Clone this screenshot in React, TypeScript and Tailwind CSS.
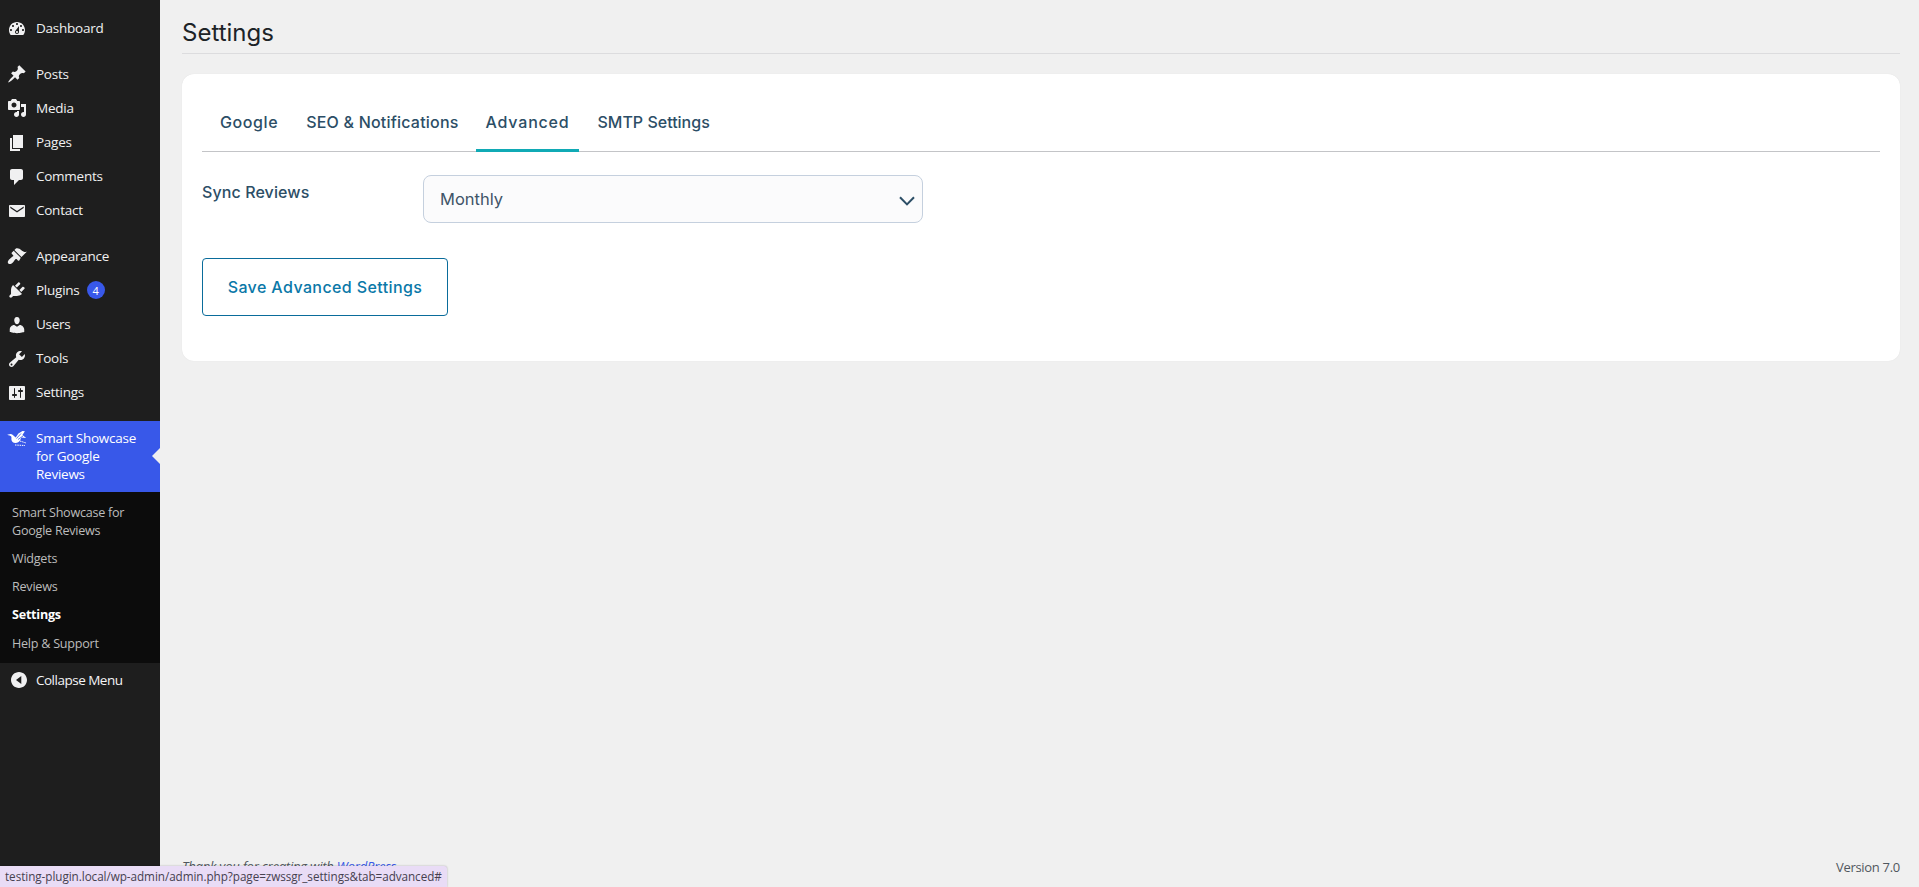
import React from "react";

const ICONS: Record<string, string> = {
  dashboard:
    "M3.76 16h12.48c1.1-1.37 1.76-3.11 1.76-5 0-4.42-3.58-8-8-8s-8 3.58-8 8c0 1.89.66 3.63 1.76 5zM10 4c.55 0 1 .45 1 1s-.45 1-1 1-1-.45-1-1 .45-1 1-1zM6 6c.55 0 1 .45 1 1s-.45 1-1 1-1-.45-1-1 .45-1 1-1zm8 0c.55 0 1 .45 1 1s-.45 1-1 1-1-.45-1-1 .45-1 1-1zm-5.37 5.55L12 7v6c0 1.1-.9 2-2 2s-2-.9-2-2c0-.57.24-1.08.63-1.45zM4 10c.55 0 1 .45 1 1s-.45 1-1 1-1-.45-1-1 .45-1 1-1zm12 0c.55 0 1 .45 1 1s-.45 1-1 1-1-.45-1-1 .45-1 1-1zm-5 3c0-.55-.45-1-1-1s-1 .45-1 1 .45 1 1 1 1-.45 1-1z",
  pin: "M10.44 3.02l1.82-1.82 6.36 6.35-1.83 1.82c-1.05-.68-2.48-.57-3.41.36l-.75.75c-.92.93-1.04 2.35-.35 3.41l-1.83 1.82-2.41-2.41-2.8 2.79c-.42.42-3.38 2.71-3.8 2.29s1.86-3.39 2.28-3.81l2.79-2.79L4.1 9.36l1.83-1.82c1.05.69 2.48.57 3.4-.36l.75-.75c.93-.92 1.05-2.35.36-3.41z",
  media:
    "M13 11V4c0-.55-.45-1-1-1h-1.67L9 1H5L3.67 3H2c-.55 0-1 .45-1 1v7c0 .55.45 1 1 1h10c.55 0 1-.45 1-1zM7 4.5c1.38 0 2.5 1.12 2.5 2.5S8.38 9.5 7 9.5 4.5 8.38 4.5 7 5.62 4.5 7 4.5zM14 6h5v10.5c0 1.38-1.12 2.5-2.5 2.5S14 17.88 14 16.5s1.12-2.5 2.5-2.5c.17 0 .34.02.5.05V9h-3V6zm-4 8.05V13h2v3.5c0 1.38-1.12 2.5-2.5 2.5S7 17.88 7 16.5 8.12 14 9.5 14c.17 0 .34.02.5.05z",
  page: "M6 15V2h10v13H6zm-1 1h8v2H3V5h2v11z",
  comments:
    "M5 2h9c1.1 0 2 .9 2 2v7c0 1.1-.9 2-2 2h-2l-5 5v-5H5c-1.1 0-2-.9-2-2V4c0-1.1.9-2 2-2z",
  email:
    "M3 4h14c.55 0 1 .45 1 1v10c0 .55-.45 1-1 1H3c-.55 0-1-.45-1-1V5c0-.55.45-1 1-1zm.3 1.6v1.5L10 11.6l6.7-4.5V5.6L10 10.1 3.3 5.6z",
  brush:
    "M14.48 11.06L7.41 3.99l1.5-1.5c.5-.56 2.3-.47 3.51.32 1.21.8 1.43 1.28 2.91 2.1 1.18.64 2.45 1.26 4.45.85zm-.71.71L6.7 4.7 4.93 6.47c-.39.39-.39 1.02 0 1.41l1.06 1.06c.39.39.39 1.03 0 1.42-.6.6-1.43 1.11-2.21 1.69-.35.26-.7.53-1.01.84C1.43 13.73 0 16.18 1.33 17.51c.56.56 1.41.66 2.21.49.8-.18 1.61-.69 2.33-1.41.31-.31.58-.66.84-1.01.58-.78 1.09-1.61 1.69-2.21.39-.39 1.03-.39 1.42 0l1.06 1.06c.39.39 1.02.39 1.41 0z",
  plugin:
    "M13.11 4.36L9.87 7.6 8 5.73l3.24-3.24c.35-.34 1.05-.2 1.56.32.52.51.66 1.21.31 1.55zm-8 1.77l.91-1.12 9.01 9.01-1.19.84c-.71.71-2.63 1.16-3.82 1.16H6.14L4.9 17.26c-.59.59-1.54.59-2.12 0-.59-.58-.59-1.53 0-2.12l1.24-1.24v-3.88c0-1.13.4-3.19 1.09-3.89zm7.26 3.97l3.24-3.24c.34-.35 1.04-.21 1.55.31.52.51.66 1.21.31 1.55l-3.24 3.25z",
  users:
    "M10 9.25c-2.27 0-2.73-3.44-2.73-3.44C7 4.02 7.82 2 9.97 2c2.16 0 2.98 2.02 2.71 3.81 0 0-.41 3.44-2.68 3.44zm0 2.57L12.72 10c2.39 0 4.52 2.33 4.52 4.53v2.49s-3.65 1.13-7.24 1.13c-3.65 0-7.24-1.13-7.24-1.13v-2.49c0-2.25 1.94-4.48 4.47-4.48z",
  tools:
    "M16.68 9.77c-1.34 1.34-3.3 1.67-4.95.99l-5.41 6.52c-.99.99-2.59.99-3.58 0s-.99-2.59 0-3.57l6.52-5.42c-.68-1.65-.35-3.61.99-4.95 1.28-1.28 3.12-1.62 4.72-1.06l-2.89 2.89 2.82 2.82 2.86-2.87c.53 1.58.18 3.39-1.08 4.65zM3.81 16.21c.4.39 1.04.39 1.43 0 .4-.4.4-1.04 0-1.43-.39-.4-1.03-.4-1.43 0-.39.39-.39 1.03 0 1.43z",
  settings:
    "M18 16V4c0-.55-.45-1-1-1H3c-.55 0-1 .45-1 1v12c0 .55.45 1 1 1h14c.55 0 1-.45 1-1zM8 11h1c.55 0 1 .45 1 1s-.45 1-1 1H8v1.5c0 .28-.22.5-.5.5s-.5-.22-.5-.5V13H6c-.55 0-1-.45-1-1s.45-1 1-1h1V5.5c0-.28.22-.5.5-.5s.5.22.5.5V11zm5-2h-1c-.55 0-1-.45-1-1s.45-1 1-1h1V5.5c0-.28.22-.5.5-.5s.5.22.5.5V7h1c.55 0 1 .45 1 1s-.45 1-1 1h-1v5.5c0 .28-.22.5-.5.5s-.5-.22-.5-.5V9z",
  collapse:
    "M10 2c4.42 0 8 3.58 8 8s-3.58 8-8 8-8-3.58-8-8 3.58-8 8-8zm2.3 4L7 10l5.300 4V6z",
};

function Dash({ name }: { name: string }) {
  return (
    <svg viewBox="0 0 20 20" className="h-5 w-5 shrink-0 fill-[#f0f0f1]">
      <path d={ICONS[name]} fillRule="evenodd" />
    </svg>
  );
}

function Bird() {
  return (
    <svg viewBox="0 0 20 20" className="h-5 w-5 shrink-0">
      <path fill="#fff" d="M0.200 5.800 3.600 4.900c1.200-.1 2 .7 2.800 1.600l2.300 2 2.700-3.900L15.500 2l2.400.300-2.500 3.700 3.800 3-4.800-.5-1.400 3c-.9 1.500-2.400 2.500-4.500 2.500-2.400 0-4.100-1.500-4.100-3.800 0-1.100.2-1.900-.2-2.600C3.600 6.600 2 6.400.2 5.800z" />
      <path fill="none" stroke="#3858e9" strokeWidth=".8" d="M9.500 9.500 14 4.500M11 10.500 16 7" />
      <path fill="none" stroke="#fff" strokeWidth="1" d="M13 12 19 14M8 16 18 16.500" strokeDasharray="1.500 .8" />
    </svg>
  );
}

function Item({ icon, label, badge }: { icon: string; label: string; badge?: string }) {
  return (
    <div className="flex h-[34.2px] items-center pl-[7px] text-[#f0f0f1]">
      <div className="w-[29px]">
        <Dash name={icon} />
      </div>
      <span className="pb-px">{label}</span>
      {badge && (
        <span className="ml-[7px] flex h-[18px] w-[18px] items-center justify-center rounded-full bg-[#3858e9] text-[11px] leading-none text-white">
          {badge}
        </span>
      )}
    </div>
  );
}

function Sub({ label, active }: { label: string; active?: boolean }) {
  return (
    <div className={`px-3 py-[5px] text-[12.6px] leading-[18.2px] ${active ? "font-bold text-white" : "text-[#bcbcbc]"}`}>
      {label}
    </div>
  );
}

const UI = "font-['Open_Sans','Noto_Sans',sans-serif]";
const PP = "font-['Inter','Lato',sans-serif]";

export default function App() {
  return (
    <div className={`relative flex h-[887px] w-full overflow-hidden bg-[#f0f0f0] ${UI} text-[13.5px] tracking-[-0.25px]`}>
      <aside className="flex w-[160px] shrink-0 flex-col bg-[#1e1e1e] pt-3">
        <Item icon="dashboard" label="Dashboard" />
        <div className="h-[11px]" />
        <Item icon="pin" label="Posts" />
        <Item icon="media" label="Media" />
        <Item icon="page" label="Pages" />
        <Item icon="comments" label="Comments" />
        <Item icon="email" label="Contact" />
        <div className="h-[11px]" />
        <Item icon="brush" label="Appearance" />
        <Item icon="plugin" label="Plugins" badge="4" />
        <Item icon="users" label="Users" />
        <Item icon="tools" label="Tools" />
        <Item icon="settings" label="Settings" />
        <div className="h-[11px]" />
        <div className="relative flex bg-[#3858e9] py-2 pl-[7px] pr-2 leading-[18.2px] text-white">
          <div className="w-[29px]">
            <Bird />
          </div>
          <div className="w-[112px]">Smart Showcase for Google Reviews</div>
          <div className="absolute right-0 top-[27px] h-0 w-0 border-y-[8px] border-r-[8px] border-y-transparent border-r-[#f0f0f0]" />
        </div>
        <div className="bg-[#0c0c0c] pb-[5px] pt-[7px]">
          <Sub label="Smart Showcase for Google Reviews" />
          <Sub label="Widgets" />
          <Sub label="Reviews" />
          <Sub label="Settings" active />
          <Sub label="Help & Support" />
        </div>
        <div className="flex h-[34px] items-center pl-[9px] text-[#f4f4f6]">
          <div className="w-[27px]">
            <Dash name="collapse" />
          </div>
          <span className="tracking-[-0.5px]">Collapse Menu</span>
        </div>
      </aside>

      <main className={`relative flex min-w-0 flex-1 flex-col pl-[22px] pr-[19px] ${PP} tracking-normal`}>
        <h1 className="flex h-[54px] items-end border-b border-[#dcdcde] pb-px text-[24px] font-normal leading-[38px] text-[#1d2327]">
          Settings
        </h1>
        <section className="mt-5 h-[287px] rounded-xl bg-white px-5 pt-[21px] shadow-[0_0_1px_rgba(0,0,0,0.1)]">
          <div className="flex h-[57px] items-stretch border-b border-[#c3c4c7] text-[16px] font-medium tracking-[0.2px] text-[#2c4e66]">
            <div className="ml-[9px] flex items-center px-[9px] pb-[3px] tracking-[0.6px]">Google</div>
            <div className="ml-[10px] flex items-center px-[9px] pb-[3px]">SEO &amp; Notifications</div>
            <div className="ml-[8px] -mb-px flex items-center border-b-[3px] border-[#10aab5] px-[10px] pb-px tracking-[0.8px]">Advanced</div>
            <div className="ml-[8px] flex items-center px-[10px] pb-[3px] tracking-normal">SMTP Settings</div>
          </div>
          <div className="mt-[23px] flex items-start">
            <label className="w-[221px] pt-[5px] text-[16px] font-medium leading-[24px] tracking-[0.1px] text-[#2c4e66]">Sync Reviews</label>
            <div className="flex h-[48px] w-[500px] items-center justify-between rounded-lg border border-[#c5d0de] bg-[#fbfbfc] pl-4 pr-[7px] text-[16.5px] text-[#3f5468]">
              <span>Monthly</span>
              <svg viewBox="0 0 16 10" className="mt-[3px] h-[10px] w-[16px]">
                <path d="M1 1.200 8 8.400 15 1.200" fill="none" stroke="#2c4e66" strokeWidth="2" />
              </svg>
            </div>
          </div>
          <button className="mt-[35px] flex h-[58px] w-[246px] items-center justify-center rounded border border-[#0a6c9b] bg-white text-[16px] font-medium tracking-[0.4px] text-[#0a78a8]">
            Save Advanced Settings
          </button>
        </section>
        <footer className={`mt-auto flex items-center justify-between pb-[10px] ${UI} text-[13px] leading-[18px] tracking-[-0.3px] text-[#50575e]`}>
          <span className="pb-[2px] italic tracking-[-0.2px]">
            Thank you for creating with <span className="text-[#3858e9]">WordPress</span>.
          </span>
          <span>Version 7.0</span>
        </footer>
      </main>

      <div className="absolute bottom-0 left-0 flex h-[21px] w-[447px] items-center whitespace-nowrap rounded-tr-[3px] bg-[#e9dcf6] pl-[5px] font-['Open_Sans',sans-serif] text-[11.7px] tracking-[-0.05px] text-[#46414f] shadow-[0_0_2px_rgba(0,0,0,0.3)]">
        testing-plugin.local/wp-admin/admin.php?page=zwssgr_settings&amp;tab=advanced#
      </div>
    </div>
  );
}
